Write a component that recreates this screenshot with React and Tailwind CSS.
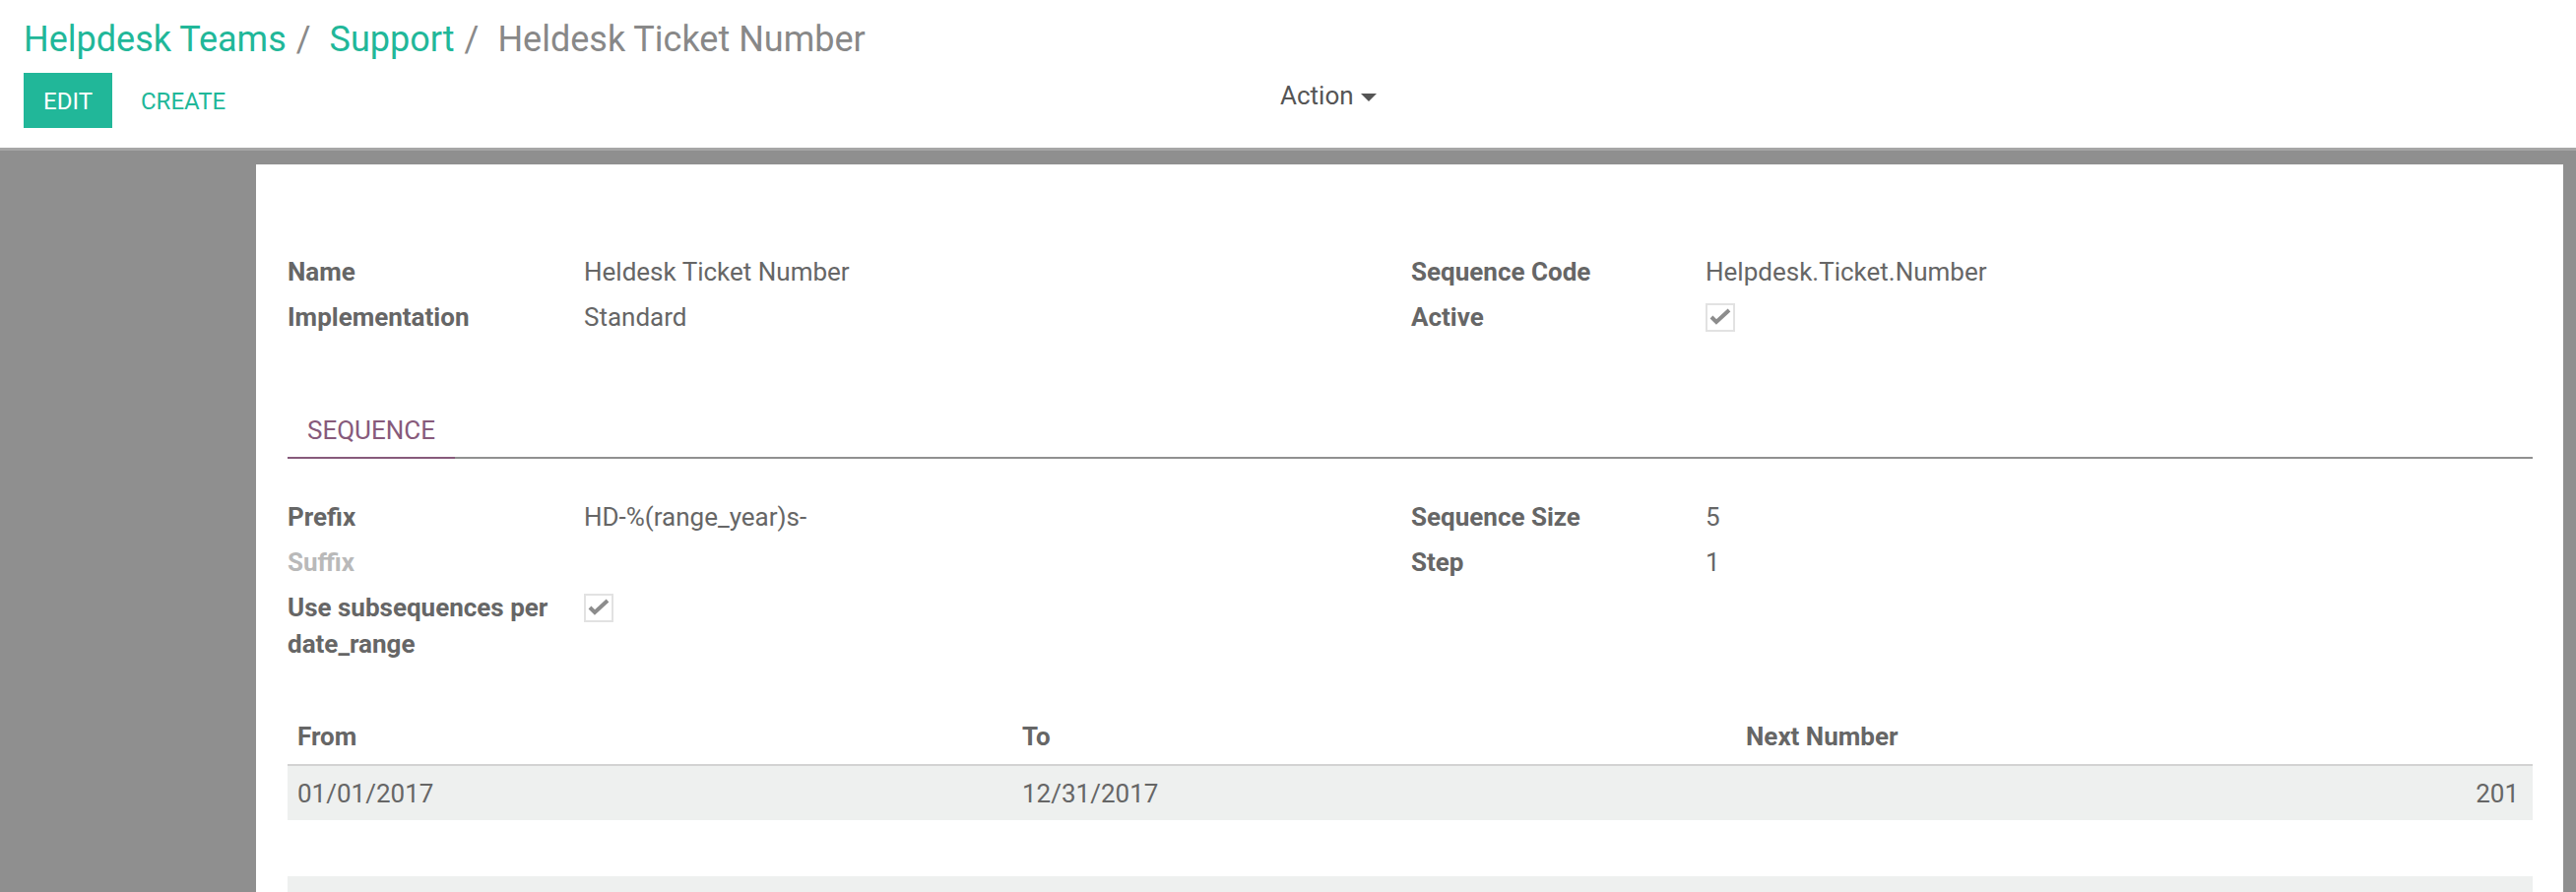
import React from "react";

function Check() {
  return (
    <div className="w-[30px] h-[29px] border-2 border-[#e2e2e2] bg-white shrink-0">
      <svg viewBox="0 0 26 25" className="w-full h-full block">
        <path d="M4 12 L9 17 L22 5" stroke="#8c8c8c" strokeWidth="4" fill="none" strokeLinejoin="miter" />
      </svg>
    </div>
  );
}

function Row({ label, value, labelW, check, muted }) {
  return (
    <div className="flex py-[4.5px] leading-[37px]">
      <div
        className={
          (labelW === 299 ? "w-[299px] " : "w-[301px] ") +
          "shrink-0 pr-[20px] font-bold " +
          (muted ? "text-[#b9b9b9]" : "text-[#666666]")
        }
      >
        {label}
      </div>
      <div className="flex-1 text-[#666666]">
        {check ? (
          <div className="pt-[4px]">
            <Check />
          </div>
        ) : (
          value
        )}
      </div>
    </div>
  );
}

export default function App() {
  return (
    <div className="h-[906px] overflow-hidden bg-[#8f8f8f] font-['Roboto',sans-serif]">
      <header className="bg-white h-[150px] pl-[24px]">
        <div className="pt-[19px] text-[36px] leading-[42px] whitespace-nowrap">
          <span className="text-[#21b799]">Helpdesk Teams</span>
          <span className="text-[#8a8a8a] px-[10px]">/{"\u00a0"}</span>
          <span className="text-[#21b799]">Support</span>
          <span className="text-[#8a8a8a] px-[10px]">/{"\u00a0"}</span>
          <span className="text-[#888888]">Heldesk Ticket Number</span>
        </div>
        <div className="mt-[13px] flex items-start">
          <div className="w-[1276px] flex items-center">
            <div className="w-[90px] h-[56px] bg-[#21b799] text-white text-[24px] flex items-center justify-center pt-[2px]">
              EDIT
            </div>
            <div className="ml-[29px] text-[24px] text-[#21b799] pt-[2px]">CREATE</div>
          </div>
          <div className="pt-[5px] flex items-center text-[26px] leading-[37px] text-[#555555]">
            <span>Action</span>
            <span className="ml-[7px] mt-[3px] inline-block w-0 h-0 border-l-[8px] border-r-[8px] border-t-[8px] border-l-transparent border-r-transparent border-t-[#555555]" />
          </div>
        </div>
      </header>

      <div className="border-t-[3px] border-[#a6a6a6] pt-[14px] pl-[260px] pr-[13px]">
        <div className="bg-white h-[800px] pr-[31px] pl-[32px] pt-[86px] text-[26px]">
          {/* Group 1 */}
          <div className="flex">
            <div className="w-[1141px] shrink-0">
              <Row label="Name" value="Heldesk Ticket Number" />
              <Row label="Implementation" value="Standard" />
            </div>
            <div className="flex-1">
              <Row label="Sequence Code" value="Helpdesk.Ticket.Number" labelW={299} />
              <Row label="Active" check labelW={299} />
            </div>
          </div>

          {/* Tabs */}
          <div className="mt-[66px] flex border-b-2 border-[#909090]">
            <div className="-mb-[2px] px-[20px] py-[8px] leading-[37px] text-[#875a7b] border-b-2 border-[#875a7b]">
              SEQUENCE
            </div>
          </div>

          {/* Group 2 */}
          <div className="mt-[36px] flex">
            <div className="w-[1141px] shrink-0">
              <Row label="Prefix" value="HD-%(range_year)s-" />
              <Row label="Suffix" value="" muted />
              <Row label="Use subsequences per date_range" check />
            </div>
            <div className="flex-1">
              <Row label="Sequence Size" value="5" labelW={299} />
              <Row label="Step" value="1" labelW={299} />
            </div>
          </div>

          {/* Table */}
          <table className="mt-[44px] w-full table-fixed text-[#666666]">
            <thead>
              <tr>
                <th className="w-[736px] text-left font-bold px-[10px] py-[9px] leading-[37px] border-b-2 border-[#d3d3d3]">From</th>
                <th className="w-[735px] text-left font-bold px-[10px] py-[9px] leading-[37px] border-b-2 border-[#d3d3d3]">To</th>
                <th className="text-left font-bold px-[10px] py-[9px] leading-[37px] border-b-2 border-[#d3d3d3]">Next Number</th>
              </tr>
            </thead>
            <tbody>
              <tr className="bg-[#eef0ef]">
                <td className="px-[10px] pt-[10px] pb-[8px] leading-[37px]">01/01/2017</td>
                <td className="px-[10px] pt-[10px] pb-[8px] leading-[37px]">12/31/2017</td>
                <td className="pl-[10px] pr-[14px] pt-[10px] pb-[8px] leading-[37px] text-right">201</td>
              </tr>
            </tbody>
          </table>

          <div className="mt-[57px] h-[60px] bg-[#eef0ef]" />
        </div>
      </div>
    </div>
  );
}
